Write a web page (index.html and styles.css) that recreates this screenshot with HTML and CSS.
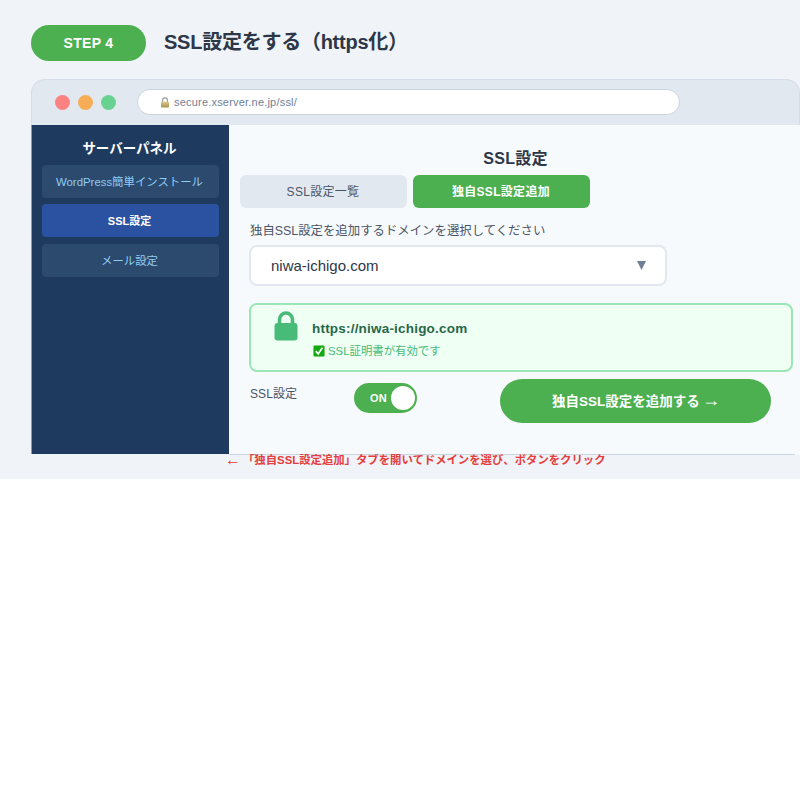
FILE: index.html
```html
<!DOCTYPE html>
<html lang="ja">
<head>
<meta charset="utf-8">
<title>STEP 4</title>
<link rel="stylesheet" href="styles.css">
</head>
<body>
<div class="stage">
  <div class="step-row">
    <div class="step-pill">STEP 4</div>
    <h1 class="step-title">SSL設定をする（https化）</h1>
  </div>
  <div class="window">
    <div class="chrome">
      <div class="dots">
        <span class="dot dot-red"></span>
        <span class="dot dot-orange"></span>
        <span class="dot dot-green"></span>
      </div>
      <div class="urlbar">
        <svg class="url-lock" viewBox="0 0 10 11" aria-hidden="true">
          <defs><linearGradient id="lockg" x1="0" y1="0" x2="0" y2="1"><stop offset="0" stop-color="#d9c98a"/><stop offset="1" stop-color="#a8924f"/></linearGradient></defs>
          <path d="M2.6 5V3.3a2.4 2.4 0 0 1 4.8 0V5" fill="none" stroke="#9a9a9a" stroke-width="1.1"/>
          <rect x="1" y="4.8" width="8" height="5.7" rx=".8" fill="url(#lockg)"/>
        </svg>
        <span class="url-text">secure.xserver.ne.jp/ssl/</span>
      </div>
    </div>
    <div class="body">
      <aside class="sidebar">
        <div class="side-title">サーバーパネル</div>
        <div class="side-item">WordPress簡単インストール</div>
        <div class="side-item side-active">SSL設定</div>
        <div class="side-item side-last">メール設定</div>
      </aside>
      <main class="main">
        <h2 class="main-title">SSL設定</h2>
        <div class="tabs">
          <div class="tab tab-off">SSL設定一覧</div>
          <div class="tab tab-on">独自SSL設定追加</div>
        </div>
        <div class="field-label">独自SSL設定を追加するドメインを選択してください</div>
        <div class="select">
          <span>niwa-ichigo.com</span>
          <svg class="select-arrow" viewBox="0 0 10 10" aria-hidden="true"><path d="M0 0H10L5 10Z" fill="#718096"/></svg>
        </div>
        <div class="status">
          <svg class="status-lock" viewBox="0 0 24 30" aria-hidden="true">
            <path d="M5.5 14V8.5a6.5 6.5 0 0 1 13 0V14" fill="none" stroke="#48bb78" stroke-width="3.6"/>
            <rect x="0.5" y="12" width="23" height="17.5" rx="3" fill="#48bb78"/>
          </svg>
          <div class="status-text">
            <div class="status-url">https://niwa-ichigo.com</div>
            <div class="status-note">
              <svg class="check" viewBox="0 0 12 12" aria-hidden="true">
                <rect x=".4" y=".4" width="11.2" height="11.2" rx="1.6" fill="#12a80f" stroke="#7fcf6e" stroke-width=".6"/>
                <path d="M2.8 6.2 5.2 8.8 9.4 2.8" fill="none" stroke="#fff" stroke-width="1.7"/>
              </svg>
              <span>SSL証明書が有効です</span>
            </div>
          </div>
        </div>
        <div class="action-row">
          <div class="switch-label">SSL設定</div>
          <div class="switch">
            <span class="switch-text">ON</span>
            <span class="switch-knob"></span>
          </div>
          <div class="cta"><span class="cta-text">独自SSL設定を追加する</span><span class="cta-arrow">→</span></div>
        </div>
        <div class="rule"></div>
      </main>
    </div>
  </div>
  <div class="caption"><span class="caption-arrow">←</span><span>「独自SSL設定追加」タブを開いてドメインを選び、ボタンをクリック</span></div>
</div>
</body>
</html>
```
FILE: styles.css
```css
* { box-sizing: border-box; }
html, body { margin: 0; padding: 0; background: #fff; }
body {
  width: 800px;
  height: 800px;
  overflow: hidden;
  font-family: "Liberation Sans", "Noto Sans CJK JP", sans-serif;
}
.stage {
  height: 479px;
  background: #f0f4f8;
  padding: 25px 0 0 31px;
  overflow: hidden;
}
.step-row {
  display: flex;
  align-items: center;
  height: 36px;
}
.step-pill {
  width: 115px;
  height: 36px;
  border-radius: 18px;
  background: #4caf50;
  color: #fff;
  font-size: 14px;
  font-weight: 700;
  letter-spacing: .3px;
  padding-bottom: 1px;
  display: flex;
  align-items: center;
  justify-content: center;
}
.step-title {
  margin: 0 0 2px 18px;
  font-size: 20px;
  line-height: 32px;
  font-weight: 700;
  letter-spacing: -.25px;
  color: #2d3748;
  white-space: nowrap;
}
.window {
  margin-top: 18px;
  width: 769px;
}
.chrome {
  height: 46px;
  background: #e2e8f0;
  border: 1px solid #d5dde8;
  border-bottom: 0;
  border-radius: 14px 14px 0 0;
  display: flex;
  align-items: flex-start;
  padding: 9px 0 0 23px;
}
.dots {
  display: flex;
  gap: 8px;
  margin-top: 6px;
}
.dot {
  width: 15px;
  height: 15px;
  border-radius: 50%;
}
.dot-red { background: #fc8181; }
.dot-orange { background: #f6ad55; }
.dot-green { background: #68d391; }
.urlbar {
  margin-left: 21px;
  width: 543px;
  height: 26px;
  background: #fff;
  border: 1px solid #cbd5e0;
  border-radius: 13px;
  display: flex;
  align-items: center;
  padding-left: 22px;
}
.url-lock {
  width: 10px;
  height: 11px;
  flex: none;
}
.url-text {
  margin-left: 4px;
  font-size: 11px;
  letter-spacing: .2px;
  color: #718096;
}
.body {
  display: flex;
  height: 330px;
}
.sidebar {
  width: 198px;
  height: 329px;
  flex: none;
  background: #1e3a5f;
  border-left: 1px solid #8b9bb0;
  padding: 14px 10px 0;
}
.side-title {
  text-align: center;
  color: #fff;
  font-size: 13.5px;
  font-weight: 700;
  line-height: 20px;
  margin-bottom: 6px;
  padding-right: 2px;
}
.side-item {
  height: 33px;
  border-radius: 4px;
  background: #2c4a6e;
  color: #90cdf4;
  font-size: 11.4px;
  padding: 0 2px 2px 0;
  display: flex;
  align-items: center;
  justify-content: center;
  white-space: nowrap;
  margin-bottom: 6px;
}
.side-active {
  background: #2b52a0;
  color: #fff;
  font-weight: 700;
  font-size: 11px;
}
.side-last {
  margin-top: 7px;
}
.main {
  flex: 1;
  background: #f7fafc;
  padding: 25px 5px 0 11px;
  position: relative;
}
.main-title {
  margin: 0;
  text-align: center;
  font-size: 16px;
  line-height: 18px;
  font-weight: 700;
  letter-spacing: .3px;
  color: #2d3748;
  padding-right: 4px;
}
.tabs {
  display: flex;
  gap: 6px;
  margin-top: 7px;
}
.tab {
  height: 33px;
  border-radius: 6px;
  font-size: 12px;
  letter-spacing: .3px;
  padding: 0 1px 2px 0;
  display: flex;
  align-items: center;
  justify-content: center;
}
.tab-off {
  width: 167px;
  background: #e2e8f0;
  color: #4a5568;
}
.tab-on {
  width: 177px;
  background: #4caf50;
  color: #fff;
  font-weight: 700;
}
.field-label {
  margin: 14px 0 0 10px;
  font-size: 12.4px;
  line-height: 18px;
  color: #4a5568;
}
.select {
  margin: 5px 0 0 9px;
  width: 418px;
  height: 41px;
  background: #fff;
  border: 2px solid #e2e8f0;
  border-radius: 8px;
  display: flex;
  align-items: center;
  justify-content: space-between;
  padding: 0 19px 0 20px;
  font-size: 15px;
  color: #2d3748;
}
.select-arrow {
  width: 9px;
  height: 9px;
}
.status {
  margin: 17px 0 0 9px;
  width: 544px;
  height: 69px;
  background: #f0fff4;
  border: 2px solid #9ae6b4;
  border-radius: 8px;
  display: flex;
  align-items: flex-start;
  padding: 6px 0 0 23px;
}
.status-lock {
  width: 24px;
  height: 30px;
  flex: none;
}
.status-text {
  margin: 9px 0 0 14px;
}
.status-url {
  font-size: 13.5px;
  line-height: 17px;
  font-weight: 700;
  letter-spacing: .2px;
  color: #276749;
}
.status-note {
  display: flex;
  align-items: center;
  margin: 7px 0 0 1px;
  font-size: 11.4px;
  line-height: 14px;
  color: #48bb78;
}
.check {
  width: 12px;
  height: 12px;
  margin: 0 3px 0 0;
  flex: none;
}
.action-row {
  display: flex;
  align-items: flex-start;
  margin: 7px 0 0 10px;
}
.switch-label {
  width: 104px;
  margin-top: 6px;
  font-size: 12px;
  letter-spacing: .1px;
  line-height: 18px;
  color: #4a5568;
}
.switch {
  width: 63px;
  height: 30px;
  margin-top: 4px;
  border-radius: 15px;
  background: #4caf50;
  display: flex;
  align-items: center;
  justify-content: space-between;
  padding: 0 2px 0 16px;
}
.switch-text {
  color: #fff;
  font-size: 11px;
  font-weight: 700;
  letter-spacing: .3px;
}
.switch-knob {
  width: 24px;
  height: 24px;
  border-radius: 50%;
  background: #fff;
}
.cta {
  width: 271px;
  height: 44px;
  margin-left: 83px;
  border-radius: 22px;
  background: #4caf50;
  color: #fff;
  font-size: 13.5px;
  font-weight: 700;
  padding-bottom: 2px;
  display: flex;
  align-items: center;
  justify-content: center;
  gap: 3px;
  white-space: nowrap;
}
.cta-arrow {
  font-size: 18px;
  font-weight: 400;
  line-height: 1;
  margin: 0 -1px;
}
.rule {
  position: absolute;
  left: 0;
  bottom: 0;
  width: 566px;
  height: 1px;
  background: #cbd5e0;
}
.caption {
  display: flex;
  align-items: center;
  margin: -1px 0 0 194px;
  font-size: 11.36px;
  line-height: 12px;
  font-weight: 700;
  color: #e53e3e;
  white-space: nowrap;
  position: relative;
}
.caption-arrow {
  font-size: 16px;
  font-weight: 400;
  width: 18px;
}
```
